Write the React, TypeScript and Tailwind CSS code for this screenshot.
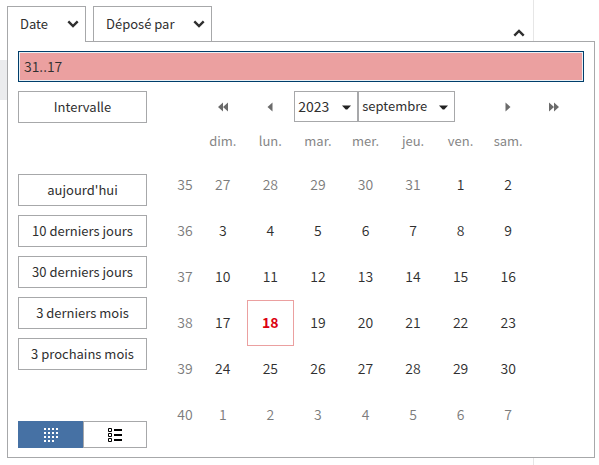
import { useState } from 'react';

const presets = [
  "aujourd'hui",
  '10 derniers jours',
  '30 derniers jours',
  '3 derniers mois',
  '3 prochains mois',
];

const weekDays = ['dim.', 'lun.', 'mar.', 'mer.', 'jeu.', 'ven.', 'sam.'];

const months = [
  'janvier',
  'février',
  'mars',
  'avril',
  'mai',
  'juin',
  'juillet',
  'août',
  'septembre',
  'octobre',
  'novembre',
  'décembre',
];

// September 2023 with the days that fill up its first and last week
const weeks = [
  { week: 35, days: [27, 28, 29, 30, 31, 1, 2] },
  { week: 36, days: [3, 4, 5, 6, 7, 8, 9] },
  { week: 37, days: [10, 11, 12, 13, 14, 15, 16] },
  { week: 38, days: [17, 18, 19, 20, 21, 22, 23] },
  { week: 39, days: [24, 25, 26, 27, 28, 29, 30] },
  { week: 40, days: [1, 2, 3, 4, 5, 6, 7] },
];

const today = { week: 38, day: 18 };

function isOutside(week: number, day: number) {
  return (week === 35 && day > 20) || (week === 40 && day < 10);
}

function Chevron({ up = false }: { up?: boolean }) {
  return (
    <svg className="w-3 h-2 shrink-0" viewBox="0 0 12 8" fill="none" stroke="#2f2f2f" strokeWidth={2.4}>
      <path d={up ? 'M1.3 6.7L6 2l4.7 4.7' : 'M1.3 1.3L6 6l4.7-4.7'} />
    </svg>
  );
}

function Tab({ label, active = false }: { label: string; active?: boolean }) {
  return (
    <button
      type="button"
      role="tab"
      aria-selected={active}
      className={
        active
          ? 'relative z-10 -mb-px h-9 flex items-center gap-[19px] pl-3 pr-1.5 pb-px bg-white border border-b-0 border-[#a7a8aa]'
          : 'h-[35px] flex items-center gap-[19px] pl-3 pr-1.5 bg-white border border-b-0 border-[#a7a8aa]'
      }
    >
      <span>{label}</span>
      <Chevron />
    </button>
  );
}

function NavButton({ label, path }: { label: string; path: string }) {
  return (
    <button type="button" aria-label={label} className="w-full h-8 flex items-center justify-center">
      <svg className="w-3 h-2.5" viewBox="0 0 12 10" fill="#6b6b6b">
        <path d={path} />
      </svg>
    </button>
  );
}

function Select({
  label,
  options,
  value,
  className,
  onChange,
}: {
  label: string;
  options: string[];
  value: string;
  className: string;
  onChange: (value: string) => void;
}) {
  return (
    <div className={`relative ${className}`}>
      <select
        aria-label={label}
        value={value}
        onChange={(e) => onChange(e.target.value)}
        className="appearance-none w-full h-[31px] pl-[3px] pr-5 pb-px bg-white border border-[#a7a8aa]"
      >
        {options.map((option) => (
          <option key={option}>{option}</option>
        ))}
      </select>
      <svg className="absolute right-[7px] top-[14px] w-[9px] h-[5px] pointer-events-none" viewBox="0 0 9 5" fill="#222">
        <path d="M0 .5h9L5.3 4.5H3.7z" />
      </svg>
    </div>
  );
}

function Calendar() {
  const [year, setYear] = useState('2023');
  const [month, setMonth] = useState('septembre');

  return (
    <table className="w-full table-fixed border-separate border-spacing-0 text-center">
      <colgroup>
        <col className="w-7" />
        {weekDays.map((day) => (
          <col key={day} />
        ))}
        <col className="w-[43px]" />
      </colgroup>
      <thead>
        <tr>
          <td className="p-0" />
          <td className="p-0">
            <NavButton label="Année précédente" path="M6 .5v9L1 5zM11 .5v9L6 5z" />
          </td>
          <td className="p-0">
            <NavButton label="Mois précédent" path="M8.5 .5v9L3.5 5z" />
          </td>
          <td colSpan={4} className="p-0">
            <div className="h-8 flex items-start text-left">
              <Select
                label="Année"
                options={['2022', '2023', '2024']}
                value={year}
                className="w-16"
                onChange={setYear}
              />
              <Select
                label="Mois"
                options={months}
                value={month}
                className="w-[97px] text-[13px]"
                onChange={setMonth}
              />
            </div>
          </td>
          <td className="p-0">
            <NavButton label="Mois suivant" path="M3.5 .5v9L8.5 5z" />
          </td>
          <td className="p-0">
            <NavButton label="Année suivante" path="M1 .5v9L6 5zM6 .5v9L11 5z" />
          </td>
        </tr>
        <tr className="h-[39px] text-[13px] text-[#868686]">
          <td className="p-0" />
          {weekDays.map((day) => (
            <th key={day} scope="col" className="p-0 pb-[3px] font-normal">
              {day}
            </th>
          ))}
          <td className="p-0" />
        </tr>
      </thead>
      <tbody>
        {weeks.map(({ week, days }) => (
          <tr key={week} className="h-[46px]">
            <th scope="row" className="p-0 pb-0.5 font-[350] text-[#7c7c7c]">
              {week}
            </th>
            {days.map((day) => {
              const isToday = week === today.week && day === today.day;
              return (
                <td key={day} className="p-0">
                  <button
                    type="button"
                    className={
                      isToday
                        ? 'block w-full h-[46px] pb-0.5 border border-[#eba0a0] font-bold text-[#dc0010]'
                        : isOutside(week, day)
                          ? 'block w-full h-[46px] pb-0.5 font-[350] text-[#7c7c7c]'
                          : 'block w-full h-[46px] pb-0.5 font-[350]'
                    }
                  >
                    {day}
                  </button>
                </td>
              );
            })}
            <td className="p-0" />
          </tr>
        ))}
      </tbody>
    </table>
  );
}

export default function App() {
  const [value, setValue] = useState('31..17');

  return (
    <div className="relative min-h-screen bg-white pl-[7px] pr-1 pt-1.5 pb-1.5 font-['Noto_Sans_CJK_JP','Noto_Sans',sans-serif] text-sm leading-5 text-[#2f2f2f]">
      {/* page behind the popup */}
      <div aria-hidden="true" className="absolute inset-y-0 right-[65px] w-px bg-[#e6e6e6]" />
      <div aria-hidden="true" className="absolute left-0 top-[60px] w-2 h-10 bg-[#ebecee]" />

      <div className="relative flex items-end">
        <div role="tablist" className="flex items-start gap-[7px] text-[13px]">
          <Tab label="Date" active />
          <Tab label="Déposé par" />
        </div>
        <button type="button" aria-label="Réduire" className="ml-auto mr-[70px] mb-1">
          <Chevron up />
        </button>
      </div>

      <div className="relative bg-white border border-[#a7a8aa] px-2.5 pt-[9px] pb-[9px]">
        <input
          type="text"
          aria-label="Date"
          value={value}
          onChange={(e) => setValue(e.target.value)}
          className="block w-full h-[31px] px-[5px] pb-0.5 bg-[#eba0a0] border border-[#003e6b] ring-1 ring-inset ring-[#e9f0f5] outline-none font-[350]"
        />

        <div className="mt-[9px] flex">
          <div className="w-[129px] shrink-0 flex flex-col text-[13px]">
            <button type="button" className="h-8 border border-[#a7a8aa]">
              Intervalle
            </button>
            <div className="mt-[51px] flex flex-col gap-[9px]">
              {presets.map((preset) => (
                <button key={preset} type="button" className="h-8 border border-[#a7a8aa] whitespace-nowrap">
                  {preset}
                </button>
              ))}
            </div>
            <div className="mt-auto flex h-[27px]">
              <button
                type="button"
                aria-label="Vue calendrier"
                aria-pressed="true"
                className="w-[65px] flex items-center justify-center bg-[#4671a4]"
              >
                <svg className="w-3.5 h-3.5" viewBox="0 0 14 14" fill="#fff" shapeRendering="crispEdges">
                  <path d="M0 0h2v2H0zM4 0h2v2H4zM8 0h2v2H8zM12 0h2v2h-2zM0 4h2v2H0zM4 4h2v2H4zM8 4h2v2H8zM12 4h2v2h-2zM0 8h2v2H0zM4 8h2v2H4zM8 8h2v2H8zM12 8h2v2h-2zM0 12h2v2H0zM4 12h2v2H4zM8 12h2v2H8z" />
                </svg>
              </button>
              <button
                type="button"
                aria-label="Vue liste"
                aria-pressed="false"
                className="flex-1 flex items-center justify-center border border-[#a7a8aa]"
              >
                <svg className="w-3.5 h-3.5" viewBox="0 0 14 14">
                  <path
                    d="M.5 .5h3v3h-3zM.5 5.5h3v3h-3zM.5 10.5h3v3h-3z"
                    fill="none"
                    stroke="#000"
                  />
                  <path d="M6 1h8v2H6zM6 6h8v2H6zM6 11h8v2H6z" />
                </svg>
              </button>
            </div>
          </div>

          <div className="flex-1 ml-6 mr-[9px] pb-2.5">
            <Calendar />
          </div>
        </div>
      </div>
    </div>
  );
}
